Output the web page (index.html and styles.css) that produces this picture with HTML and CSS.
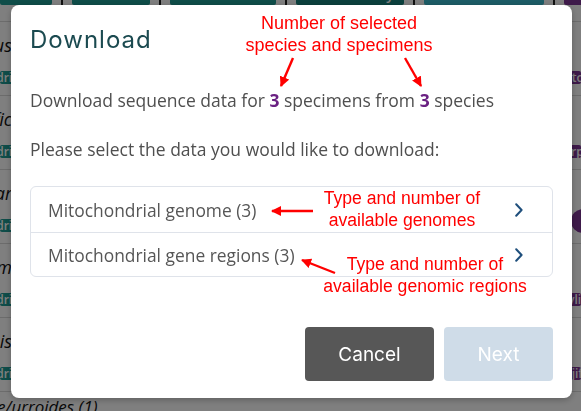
FILE: index.html
```html
<!DOCTYPE html>
<html lang="en">
<head>
<meta charset="utf-8">
<title>Download</title>
<link rel="stylesheet" href="styles.css">
</head>
<body>
<div class="page">
  <div class="taxa-bar">
    <span class="tag teal w1">Tetrapodomorpha</span><span class="sep"></span>
    <span class="tag teal w2">Vertebrata</span><span class="sep"></span>
    <span class="tag teal w3">Gnathostomata</span><span class="sep"></span>
    <span class="tag dark w4">Chondrichthyes</span><span class="sep"></span>
    <span class="tag blue w5">Elasmobranchii</span><span class="sep"></span>
    <span class="tag purple w6">Batoidea</span>
  </div>
  <div class="rows">
    <div class="row"><div class="name"><span>Genus speciosus</span></div><div class="tags"><span class="tag teal">Chondrichthyes</span><span class="tag purple right">Batomorphi</span></div></div>
    <div class="row"><div class="name"><span>Raja clavata saxatilis pacific</span></div><div class="tags"><span class="tag teal">Chondrichthyes</span><span class="tag purple right">Torpediniformes</span></div></div>
    <div class="row"><div class="name"><span>Mobula tarapacanar</span></div><div class="tags"><span class="tag teal">Chondrichthyes</span><span class="dot"></span></div></div>
    <div class="row"><div class="name"><span>Dasyatis americanum</span></div><div class="tags"><span class="tag teal">Chondrichthyes</span><span class="tag purple right">Myliobatiformes na</span></div></div>
    <div class="row"><div class="name"><span>Leucoraja fullonis</span></div><div class="tags"><span class="tag teal">Chondrichthyes</span><span class="tag purple right">Rajiformes ob</span></div></div>
    <div class="row last"><div class="name"><span>e/urroides (1)</span></div></div>
  </div>
</div>
<div class="overlay"></div>

<div class="modal">
  <h2 class="modal-title">Download</h2>
  <div class="modal-body">
    <p>Download sequence data for <b class="num">3</b> specimens from <b class="num">3</b> species</p>
    <p>Please select the data you would like to download:</p>
    <ul class="options">
      <li class="option"><span>Mitochondrial genome (3)</span><svg class="chev" viewBox="0 0 8 14" width="8" height="14"><path d="M1.2 1.2 L6.6 7 L1.2 12.8" fill="none" stroke="#1f4f7c" stroke-width="2" stroke-linecap="round" stroke-linejoin="round"/></svg></li>
      <li class="option"><span>Mitochondrial gene regions (3)</span><svg class="chev" viewBox="0 0 8 14" width="8" height="14"><path d="M1.2 1.2 L6.6 7 L1.2 12.8" fill="none" stroke="#1f4f7c" stroke-width="2" stroke-linecap="round" stroke-linejoin="round"/></svg></li>
    </ul>
  </div>
  <div class="modal-footer">
    <button class="btn btn-cancel">Cancel</button>
    <button class="btn btn-next" disabled>Next</button>
  </div>
</div>

<div class="note note-top">Number of selected<br>species and specimens</div>
<div class="note note-genomes">Type and number of<br>available genomes</div>
<div class="note note-regions">Type and number of<br>available genomic regions</div>
<svg class="arrows" width="581" height="411" viewBox="0 0 581 411">
  <defs>
    <marker id="ah" viewBox="0 0 10 10" refX="9" refY="5" markerWidth="4.2" markerHeight="4.2" orient="auto-start-reverse" markerUnits="strokeWidth">
      <path d="M0 0 L10 5 L0 10 z" fill="#ff0000"/>
    </marker>
  </defs>
  <line x1="293" y1="58" x2="281" y2="86" stroke="#ff0000" stroke-width="2.4" marker-end="url(#ah)"/>
  <line x1="405" y1="58" x2="421" y2="86" stroke="#ff0000" stroke-width="2.4" marker-end="url(#ah)"/>
  <line x1="313" y1="211" x2="272" y2="211" stroke="#ff0000" stroke-width="2.4" marker-end="url(#ah)"/>
  <line x1="335" y1="273" x2="302" y2="260" stroke="#ff0000" stroke-width="2.4" marker-end="url(#ah)"/>
</svg>
</body>
</html>
```
FILE: styles.css
```css
* { box-sizing: border-box; }
html, body { margin: 0; padding: 0; }
body {
  width: 581px;
  height: 411px;
  overflow: hidden;
  background: #ffffff;
  font-family: "Open Sans", "Liberation Sans", sans-serif;
  position: relative;
}

/* background page */
.page { width: 581px; height: 411px; overflow: hidden; }
.taxa-bar {
  display: flex;
  align-items: flex-start;
  height: 22px;
  border-bottom: 1px solid #d8d8d8;
  white-space: nowrap;
  overflow: hidden;
}
.taxa-bar .tag { height: 21px; line-height: 21px; flex: none; margin-top: -16px; }
.sep { width: 2px; height: 12px; background: #222; margin: -7px 9px 0; flex: none; }
.w1 { width: 52px; text-indent: -50px; }
.w2 { width: 78px; }
.w3 { width: 106px; }
.w4 { width: 108px; }
.w5 { width: 120px; }
.w6 { width: 60px; }

.tag {
  display: inline-block;
  font-family: "Open Sans", sans-serif;
  font-size: 14px;
  font-weight: 600;
  color: #ffffff;
  padding: 0 6px;
  border-radius: 2px;
  overflow: hidden;
  white-space: nowrap;
}
.teal { background: #1e9a92; }
.dark { background: #17807a; }
.blue { background: #3ab8cc; }
.purple { background: #7c3494; }

.rows { display: flex; flex-direction: column; }
.row {
  height: 74px;
  flex: none;
  border-bottom: 1px solid #d8d8d8;
  padding-top: 12px;
  display: flex;
  flex-direction: column;
  gap: 15px;
}
.row.last { border-bottom: none; padding-top: 4px; }
.name {
  width: 12px;
  height: 22px;
  display: flex;
  justify-content: flex-end;
  overflow: hidden;
  font-family: "Open Sans", sans-serif;
  font-style: italic;
  font-size: 18px;
  line-height: 22px;
  color: #111;
  white-space: nowrap;
}
.row.last .name { width: 220px; justify-content: flex-start; text-indent: -3px; font-size: 17px; }
.tags {
  display: flex;
  justify-content: space-between;
  align-items: center;
  height: 13px;
}
.tags .tag {
  height: 13px;
  line-height: 13px;
  font-size: 12px;
  width: 60px;
  text-indent: -40px;
}
.tags .tag.right { width: 30px; text-indent: 0; }
.dot {
  width: 30px;
  height: 24px;
  border-radius: 12px;
  background: #7c3494;
  margin-right: -20px;
  margin-top: -10px;
}

.overlay {
  position: fixed;
  inset: 0;
  background: rgba(0, 0, 0, 0.5);
}

/* modal */
.modal {
  position: fixed;
  left: 11px;
  top: 5px;
  width: 561px;
  height: 393px;
  background: #ffffff;
  border-radius: 8px;
  box-shadow: 0 2px 6px rgba(0, 0, 0, 0.25);
  display: flex;
  flex-direction: column;
  padding: 0 19px 17px;
}
.modal-title {
  margin: 0;
  padding-top: 20px;
  font-family: "Inter", "Open Sans", sans-serif;
  font-weight: 400;
  font-size: 24px;
  line-height: 30px;
  letter-spacing: 1px;
  color: #1b4a50;
}
.modal-body p {
  margin: 0;
  font-size: 17.5px;
  line-height: 24px;
  color: #4f4f4f;
}
.modal-body p:first-child { margin-top: 33px; }
.modal-body p + p { margin-top: 25px; }
.num { color: #6a2182; font-weight: 700; }

.options {
  list-style: none;
  margin: 25px 0 0;
  padding: 0;
  border: 1px solid #dfe3ea;
  border-radius: 6px;
}
.option {
  height: 45px;
  display: flex;
  align-items: center;
  justify-content: space-between;
  padding: 0 29px 0 17px;
  font-size: 17.4px;
  color: #565656;
}
.option + .option { border-top: 1px solid #dfe3ea; height: 44px; }
.chev { display: block; }

.modal-footer {
  margin-top: auto;
  display: flex;
  justify-content: flex-end;
  gap: 10px;
}
.btn {
  height: 54px;
  border: none;
  border-radius: 4px;
  font-family: "Inter", "Open Sans", sans-serif;
  font-size: 19px;
  color: #ffffff;
  padding: 0;
}
.btn-cancel { width: 129px; background: #575757; }
.btn-next { width: 109px; background: #cfdce8; }

/* annotations */
.note {
  position: absolute;
  color: #ff0000;
  font-family: "Liberation Sans", Arial, sans-serif;
  font-size: 17.6px;
  line-height: 22px;
  text-align: center;
  white-space: nowrap;
}
.note-top { left: 244px; top: 12px; width: 190px; font-size: 18px; }
.note-genomes { left: 312px; top: 187px; width: 180px; }
.note-regions { left: 314px; top: 253px; width: 222px; }
.arrows { position: absolute; left: 0; top: 0; }
```
